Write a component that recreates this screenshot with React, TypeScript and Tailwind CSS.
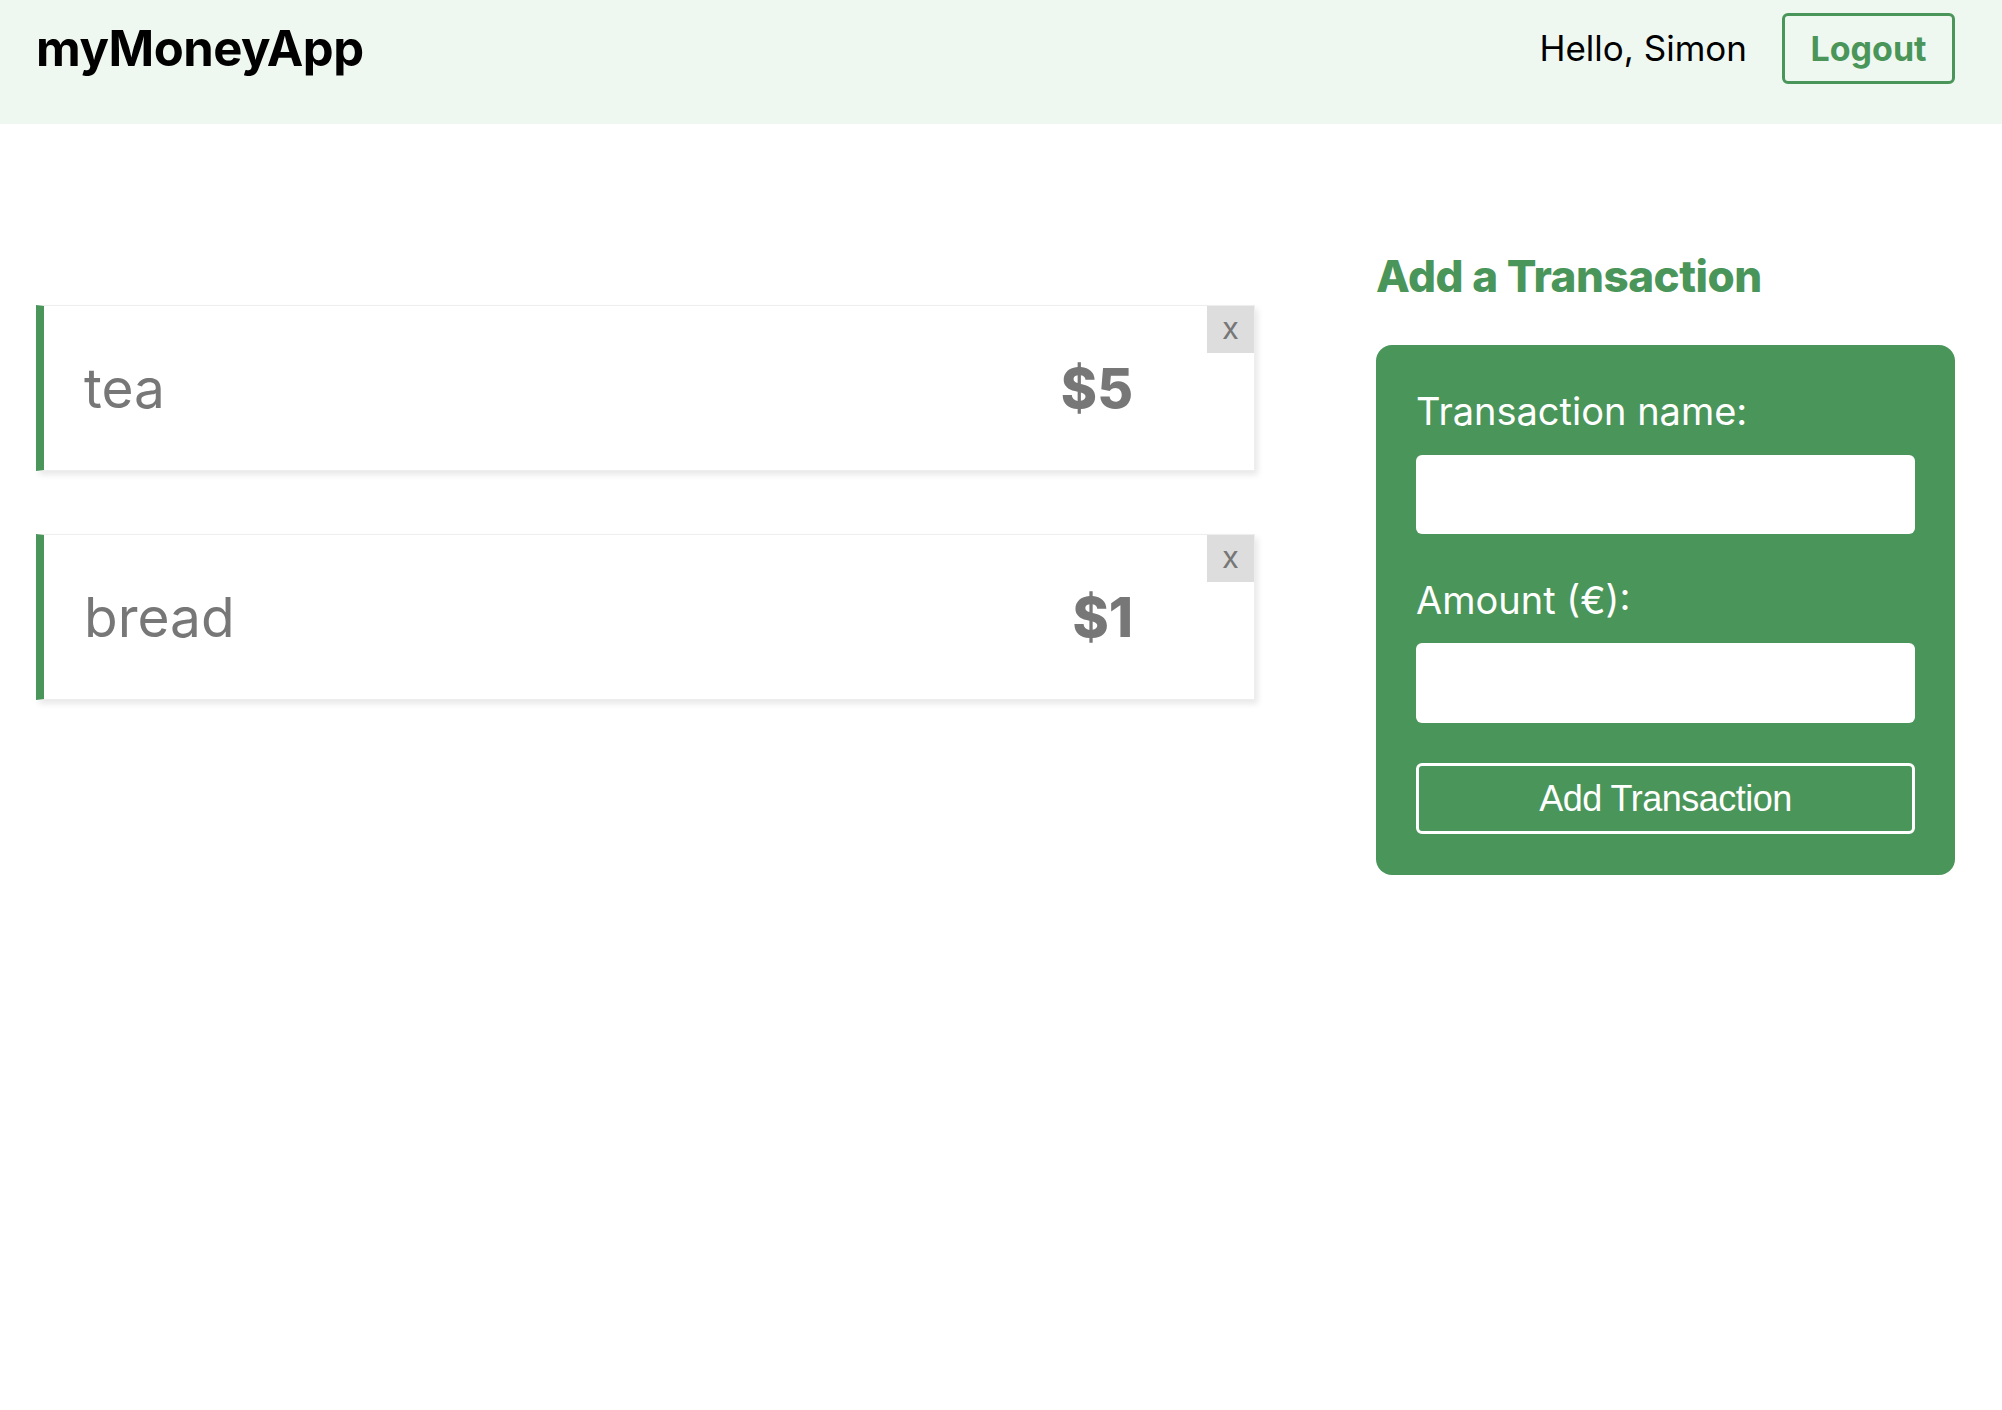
import { useState } from "react";

type Tx = { id: number; name: string; amount: number };

const font = { fontFamily: "Inter, 'Noto Sans', sans-serif" };

export default function App() {
  const [items, setItems] = useState<Tx[]>([
    { id: 1, name: "tea", amount: 5 },
    { id: 2, name: "bread", amount: 1 },
  ]);
  const [name, setName] = useState("");
  const [amount, setAmount] = useState("");

  const removeItem = (id: number) => {
    setItems(items.filter((t) => t.id !== id));
  };

  const addItem = (e: React.FormEvent) => {
    e.preventDefault();
    if (!name || !amount) return;
    setItems([...items, { id: Date.now(), name, amount: Number(amount) }]);
    setName("");
    setAmount("");
  };

  return (
    <div className="min-h-screen w-full bg-white" style={font}>
      <nav className="flex h-[124px] items-start justify-between bg-[#eff8f0] pl-[36px] pr-[47px] pt-[13px]">
        <p className="h-[71px] text-[49px] font-bold leading-[71px] tracking-[-0.5px] text-black">myMoneyApp</p>
        <div className="flex items-center gap-[35px]">
          <p className="text-[35px] text-black">Hello, Simon</p>
          <button className="h-[71px] w-[173px] rounded-[6px] border-[3px] border-[#4a9559] text-[34px] font-bold text-[#4a9559]">
            Logout
          </button>
        </div>
      </nav>

      <div className="flex items-start gap-[121px] pl-[36px]">
        <ul className="mt-[181px] flex w-[1219px] flex-col gap-[63px]">
          {items.map((t) => (
            <li
              key={t.id}
              className="relative flex h-[166px] items-center justify-between border border-l-[8px] border-[#eeeeee] border-l-[#4a9559] bg-white pl-[40px] pr-[121px] shadow-[3px_4px_6px_rgba(0,0,0,0.09)]"
            >
              <span className="text-[55px] text-[#777777]">{t.name}</span>
              <span className="text-[55px] font-extrabold text-[#777777]">${t.amount}</span>
              <button
                onClick={() => removeItem(t.id)}
                className="absolute right-0 top-0 flex h-[47px] w-[47px] items-center justify-center bg-[#dddddd] pb-[2px] text-[31px] text-[#777777]"
              >
                x
              </button>
            </li>
          ))}
        </ul>

        <div className="mt-[125px] flex w-[579px] flex-col">
          <h3 className="h-[54px] text-[44px] font-extrabold leading-[54px] tracking-[-0.5px] text-[#4a9559]">
            Add a Transaction
          </h3>
          <form
            onSubmit={addItem}
            className="mt-[42px] flex flex-col rounded-[16px] bg-[#4a9559] px-[40px] pb-[41px] pt-[41px]"
          >
            <label className="h-[50px] text-[38px] leading-[50px] text-white">Transaction name:</label>
            <input
              value={name}
              onChange={(e) => setName(e.target.value)}
              className="mt-[19px] h-[79px] w-full rounded-[6px] bg-white px-4 text-[30px] outline-none"
            />
            <label className="mt-[41px] h-[50px] text-[38px] leading-[50px] text-white">Amount (€):</label>
            <input
              value={amount}
              onChange={(e) => setAmount(e.target.value)}
              className="mt-[18px] h-[80px] w-full rounded-[6px] bg-white px-4 text-[30px] outline-none"
            />
            <button
              type="submit"
              className="mt-[40px] h-[71px] w-full rounded-[6px] border-[3px] border-white text-[36px] tracking-[-0.5px] text-white"
              style={{ fontFamily: "'Liberation Sans', Arial, sans-serif" }}
            >
              Add Transaction
            </button>
          </form>
        </div>
      </div>
    </div>
  );
}
